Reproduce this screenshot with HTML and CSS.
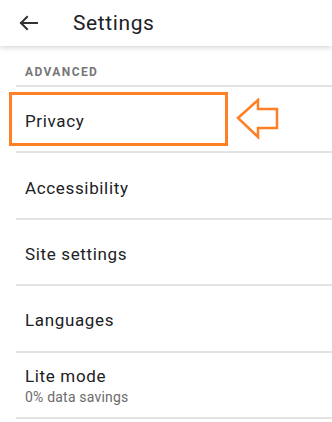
FILE: index.html
```html
<!DOCTYPE html>
<html>
<head>
<meta charset="utf-8">
<link rel="stylesheet" href="styles.css">
</head>
<body>
<header class="topbar">
  <svg class="back" width="24" height="24" viewBox="0 0 24 24"><path d="M21 12H5M11 6l-6 6 6 6" fill="none" stroke="#333" stroke-width="2" stroke-linecap="square"/></svg>
  <h1 class="title">Settings</h1>
</header>
<div class="section">ADVANCED</div>
<ul class="list">
  <li class="row highlighted">
    <span class="label">Privacy</span>
    <span class="box"></span>
    <svg class="pointer" width="44" height="42" viewBox="0 0 44 42"><path d="M2 20 L22 2 L22 11 L41 11 L41 30 L22 30 L22 39 Z" fill="#fff" stroke="#ff7f27" stroke-width="2.5" stroke-linejoin="miter"/></svg>
  </li>
  <li class="row"><span class="label">Accessibility</span></li>
  <li class="row"><span class="label">Site settings</span></li>
  <li class="row"><span class="label">Languages</span></li>
  <li class="row"><span class="label">Lite mode</span><span class="sub">0% data savings</span></li>
</ul>
</body>
</html>
```

FILE: styles.css
```css
html, body {
  margin: 0;
  padding: 0;
  background: #fff;
  font-family: Roboto, "Noto Sans", sans-serif;
  overflow: hidden;
}
.topbar {
  height: 46px;
  display: flex;
  align-items: center;
  background: #fff;
  box-shadow: 0 1px 6px rgba(0, 0, 0, 0.2);
  position: relative;
  z-index: 1;
}
.back {
  margin-left: 16px;
  margin-right: 33px;
  flex: none;
}
.title {
  margin: 0;
  font-size: 21px;
  font-weight: 400;
  line-height: 46px;
  letter-spacing: 0.6px;
  color: #202124;
}
.section {
  margin-left: 16px;
  padding: 18px 0 3px 9px;
  height: 18px;
  line-height: 16px;
  font-size: 12px;
  font-weight: 700;
  letter-spacing: 1.4px;
  color: #777;
  border-bottom: 2px solid #e3e3e3;
}
.list {
  list-style: none;
  margin: 0;
  padding: 0;
}
.row {
  position: relative;
  margin-left: 16px;
  padding: 4px 0 0 9px;
  height: 60.4px;
  display: flex;
  flex-direction: column;
  justify-content: center;
  border-bottom: 2px solid #e3e3e3;
}
.label {
  font-size: 17px;
  line-height: 22px;
  letter-spacing: 0.65px;
  color: #202124;
}
.sub {
  font-size: 14px;
  line-height: 21px;
  letter-spacing: 0.2px;
  color: #6b6b6b;
}
.box {
  position: absolute;
  left: -7px;
  top: 5px;
  width: 219px;
  height: 54px;
  box-sizing: border-box;
  border: 3px solid #ff7f27;
}
.pointer {
  position: absolute;
  left: 220px;
  top: 11px;
}
```
